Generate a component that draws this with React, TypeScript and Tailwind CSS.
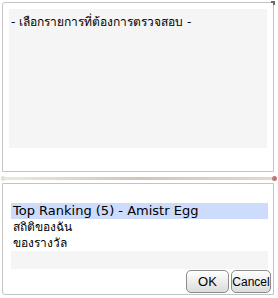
import { useState } from "react";

const ITEMS = ["Top Ranking (5) - Amistr Egg", "สถิติของฉัน", "ของรางวัล"];

export default function App() {
  const [selected, setSelected] = useState(0);

  return (
    <div
      className="flex flex-col w-[278px] h-[298px] bg-white text-[12px] text-black overflow-hidden pt-[2px]"
      style={{ fontFamily: '"DejaVu Sans", Tahoma, "Noto Sans", sans-serif' }}
    >
      {/* top panel */}
      <div className="relative mx-[2px] h-[170px] w-[272px] border border-[#c4c4c4] rounded-tl-[3px] bg-white px-[6px] pt-[6px]">
        <div className="h-[139px] bg-[#f5f5f5] px-[2px] pt-[6px] leading-[14px]">
          - เลือกรายการที่ต้องการตรวจสอบ -
        </div>
        <div className="absolute -right-[2px] -top-[2px] w-[4px] h-[4px] border-t-2 border-r-2 border-[#6b6b5e]" />
      </div>

      {/* splitter */}
      <div className="flex items-center h-[5px] mt-[4px] px-[1px]">
        <div className="w-[4px] h-[5px] rounded-full bg-[#e4e0d0]" />
        <div className="flex-1 h-[3px] bg-gradient-to-r from-[#ece8dc] via-[#cfc8b4] to-[#e2d8d0]" />
        <div className="w-[5px] h-[5px] rounded-full bg-[#b87a78]" />
      </div>

      {/* bottom panel */}
      <div className="flex flex-col mx-[2px] mt-[2px] w-[272px] h-[112px] border border-[#c4c4c4] rounded-bl-[3px] bg-white pl-[8px] pr-[2px] pt-[19px]">
        <div className="h-[66px] w-[257px] bg-[#f5f5f5]">
          {ITEMS.map((item, i) => (
            <div
              key={item}
              onClick={() => setSelected(i)}
              className={`h-[16px] leading-[16px] px-[2px] cursor-default ${
                i === 0 ? "text-[13px]" : "text-[12px]"
              } ${i === selected ? "bg-[#cddcfc]" : "bg-white"}`}
            >
              {item}
            </div>
          ))}
        </div>
        <div
          className="flex justify-end gap-[2px] mt-[1px]"
          style={{ fontFamily: '"Liberation Sans", Arial, sans-serif' }}
        >
          <button className="w-[43px] h-[23px] rounded-[5px] border border-[#8c8c8c] bg-gradient-to-b from-white to-[#dcdcdc] text-[13px] leading-none">
            OK
          </button>
          <button className="w-[40px] h-[23px] rounded-[5px] border border-[#8c8c8c] bg-gradient-to-b from-white to-[#dcdcdc] text-[12px] leading-none">
            Cancel
          </button>
        </div>
      </div>
    </div>
  );
}
